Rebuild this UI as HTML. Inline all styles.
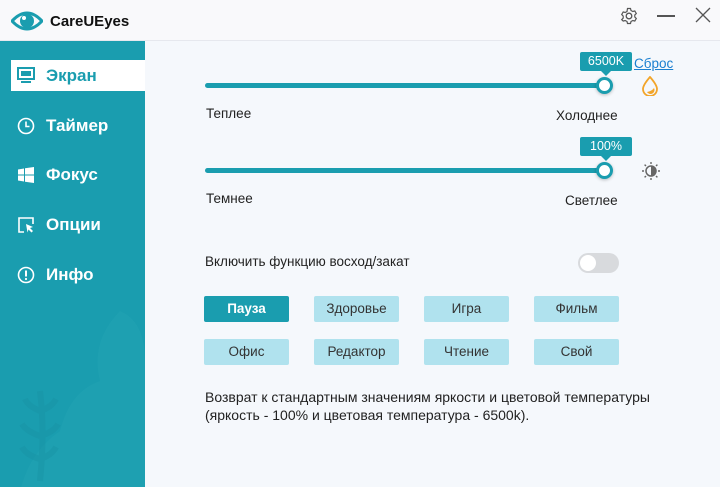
<!DOCTYPE html><html><head><meta charset="utf-8"><style>
*{margin:0;padding:0;box-sizing:border-box}
body{width:720px;height:487px;overflow:hidden;font-family:"Liberation Sans","DejaVu Sans",sans-serif;background:#f5f8fc;position:relative;color:#222}
.title{position:absolute;left:0;top:0;width:720px;height:41px;background:#f9f9fb;border-bottom:1px solid #e6e8ee}
.side{position:absolute;left:0;top:41px;width:145px;height:446px;background:#1a9daf;overflow:hidden}
.item{position:absolute;left:11px;width:134px;height:31px;color:#fff;font-weight:bold;font-size:17px;line-height:31px;padding-left:35px}
.item.act{background:#fff;color:#1a9daf}
.item svg{position:absolute;left:6px;top:7px}
.abs{position:absolute}
.track{position:absolute;left:205px;width:400px;height:5px;border-radius:3px;background:#1a9daf}
.knob{position:absolute;width:17px;height:17px;border-radius:50%;background:#fff;border:3.5px solid #1a9daf;box-shadow:0 1px 3px rgba(0,0,0,.25)}
.tip{position:absolute;background:#1a9daf;color:#fff;font-size:12.5px;text-align:center;height:19px;line-height:19px;border-radius:2px}
.tip:after{content:"";position:absolute;left:50%;bottom:-5px;margin-left:-5px;border:5px solid transparent;border-bottom:0;border-top-color:#1a9daf}
.lbl{position:absolute;font-size:13.5px;color:#222}
.btn{position:absolute;width:85px;height:26px;background:#b0e2ee;color:#333;font-size:13.5px;text-align:center;line-height:26px;border-radius:2px}
</style></head><body>
<div class="title">
<svg class="abs" style="left:11px;top:10px" width="32" height="22" viewBox="0 0 32 22"><path d="M1 11 Q16 -5 31 11 Q16 27 1 11Z" fill="none" stroke="#1a9daf" stroke-width="3"/><circle cx="16" cy="11" r="7" fill="#1a9daf"/><circle cx="13" cy="8" r="2" fill="#fff"/></svg>
<div class="abs" style="left:50px;top:13px;font-weight:bold;font-size:15px;color:#111">CareUEyes</div>
<svg class="abs" style="left:620px;top:7px" width="18" height="18" viewBox="0 0 18 18"><circle cx="9" cy="9" r="2.8" fill="none" stroke="#555" stroke-width="1.3"/><path d="M7.5 1.5h3l.5 2 1.8 1 2-.6 1.5 2.6-1.5 1.5v2l1.5 1.5-1.5 2.6-2-.6-1.8 1-.5 2h-3l-.5-2-1.8-1-2 .6L1.7 12.6l1.5-1.5v-2L1.7 7.5l1.5-2.6 2 .6 1.8-1z" fill="none" stroke="#555" stroke-width="1.2"/></svg>
<div class="abs" style="left:657px;top:15px;width:18px;height:1.5px;background:#555"></div>
<svg class="abs" style="left:695px;top:7px" width="16" height="16"><path d="M1 1L15 15M15 1L1 15" stroke="#555" stroke-width="1.3"/></svg>
</div>
<div class="side">
<svg class="abs" style="left:0;top:240px" width="145" height="210" viewBox="0 0 145 210"><path d="M120 30 q25 10 25 50 v130 H20 q10-40 40-60 q10-40 40-50 q-10-40 20-70z" fill="#22a3b4" opacity=".5"/><path d="M40 110 q5 40 0 90 M40 130 q-12-5-15-12 M40 130 q12-4 16-12 M40 155 q-14-5-18-12 M40 155 q14-4 18-12 M40 178 q-14-4-18-12 M40 178 q12-4 16-12" stroke="#1894a6" stroke-width="6" fill="none" opacity=".5"/></svg>
<div class="item act" style="top:19px"><svg width="18" height="17" viewBox="0 0 18 17"><rect x="1" y="1" width="16" height="11" fill="none" stroke="#1a9daf" stroke-width="2"/><rect x="4" y="4" width="10" height="5" fill="#1a9daf"/><rect x="4" y="14" width="10" height="2" fill="#1a9daf"/></svg>Экран</div>
<div class="item" style="top:69px"><svg width="18" height="18"><circle cx="9" cy="9" r="7.5" fill="none" stroke="#fff" stroke-width="1.6"/><path d="M9 4.5V9.5H12.5" stroke="#fff" stroke-width="1.6" fill="none"/></svg>Таймер</div>
<div class="item" style="top:118px"><svg width="18" height="18"><path d="M1 3.5l6-1v6H1zM8 2.3l9-1.3v7.5H8zM1 9.5h6v6l-6-1zM8 9.5h9V17l-9-1.3z" fill="#fff"/></svg>Фокус</div>
<div class="item" style="top:168px"><svg width="18" height="18"><path d="M7 16H2V2h14v6" fill="none" stroke="#fff" stroke-width="1.6"/><path d="M9 8l7 3-3 1 3 3-1.5 1.5-3-3-1 3z" fill="#fff"/></svg>Опции</div>
<div class="item" style="top:218px"><svg width="18" height="18"><circle cx="9" cy="9" r="7.5" fill="none" stroke="#fff" stroke-width="1.6"/><path d="M9 4.5v6" stroke="#fff" stroke-width="2"/><circle cx="9" cy="13" r="1.1" fill="#fff"/></svg>Инфо</div>
</div>
<div class="tip" style="left:580px;top:52px;width:52px">6500K</div>
<a class="abs" style="left:634px;top:56px;font-size:13.5px;color:#1a7fd0;text-decoration:underline">Сброс</a>
<svg class="abs" style="left:641px;top:76px" width="18" height="20" viewBox="0 0 18 20"><path d="M9 1 Q16 9 16 13 A7 7 0 0 1 2 13 Q2 9 9 1Z" fill="none" stroke="#f2a52a" stroke-width="1.8"/><path d="M13 12 A4 4 0 0 1 6 16 Q11 15 13 12Z" fill="#f2a52a"/></svg>
<div class="track" style="top:83px"></div><div class="knob" style="left:596px;top:77px"></div>
<div class="lbl" style="left:206px;top:106px">Теплее</div><div class="lbl" style="left:556px;top:108px">Холоднее</div>
<div class="tip" style="left:580px;top:137px;width:52px">100%</div>
<div class="track" style="top:168px"></div><div class="knob" style="left:596px;top:162px"></div>
<svg class="abs" style="left:641px;top:161px" width="20" height="20" viewBox="0 0 20 20"><circle cx="10" cy="10" r="5" fill="none" stroke="#666" stroke-width="1.5"/><path d="M10 5A5 5 0 0 1 10 15Z" fill="#666"/><path d="M10 1v2M10 17v2M1 10h2M17 10h2M3.6 3.6l1.4 1.4M15 15l1.4 1.4M3.6 16.4L5 15M15 5l1.4-1.4" stroke="#666" stroke-width="1.4"/></svg>
<div class="lbl" style="left:206px;top:191px">Темнее</div><div class="lbl" style="left:565px;top:193px">Светлее</div>
<div class="lbl" style="left:205px;top:254px">Включить функцию восход/закат</div>
<div class="abs" style="left:578px;top:253px;width:41px;height:20px;border-radius:10px;background:#d8dadd"><div style="position:absolute;left:2px;top:2px;width:16px;height:16px;border-radius:50%;background:#fff"></div></div>
<div class="btn" style="left:204px;top:296px;background:#1a9daf;color:#fff;font-weight:bold">Пауза</div>
<div class="btn" style="left:314px;top:296px">Здоровье</div>
<div class="btn" style="left:424px;top:296px">Игра</div>
<div class="btn" style="left:534px;top:296px">Фильм</div>
<div class="btn" style="left:204px;top:339px">Офис</div>
<div class="btn" style="left:314px;top:339px">Редактор</div>
<div class="btn" style="left:424px;top:339px">Чтение</div>
<div class="btn" style="left:534px;top:339px">Свой</div>
<div class="lbl" style="left:205px;top:388px;line-height:18px;font-size:14px">Возврат к стандартным значениям яркости и цветовой температуры<br>(яркость - 100% и цветовая температура - 6500k).</div>
</body></html>
